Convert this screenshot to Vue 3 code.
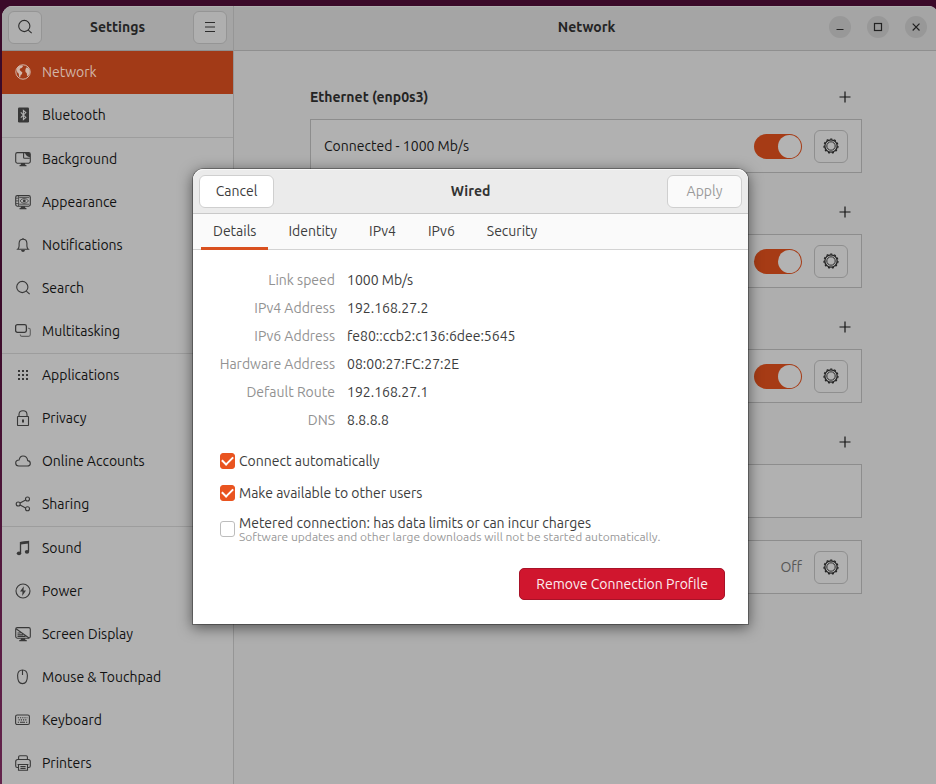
<script setup>
import { ref } from 'vue'

const groups = [
  [
    { icon: 'globe', label: 'Network' },
    { icon: 'bluetooth', label: 'Bluetooth' },
  ],
  [
    { icon: 'background', label: 'Background' },
    { icon: 'appearance', label: 'Appearance' },
    { icon: 'bell', label: 'Notifications' },
    { icon: 'search', label: 'Search' },
    { icon: 'multitasking', label: 'Multitasking' },
  ],
  [
    { icon: 'apps', label: 'Applications' },
    { icon: 'lock', label: 'Privacy' },
    { icon: 'cloud', label: 'Online Accounts' },
    { icon: 'share', label: 'Sharing' },
  ],
  [
    { icon: 'sound', label: 'Sound' },
    { icon: 'power', label: 'Power' },
    { icon: 'display', label: 'Screen Display' },
    { icon: 'mouse', label: 'Mouse & Touchpad' },
    { icon: 'keyboard', label: 'Keyboard' },
    { icon: 'printer', label: 'Printers' },
  ],
]

const icons = {
  globe:
    '<circle cx="8" cy="8" r="7.2" stroke-width="1"/><path fill="currentColor" stroke="none" d="M1.600 5 4 2.200 7.200 1.200 8 2.600 6.600 4 5.200 4.600 4.600 6 6 7.200 7.400 8.600 6.800 10.200 5.600 11.200 5.200 13.600 4 12.600 3.800 9.800 2.200 8.200zM10.600 4.800l1.200-1.600 1.800 1 1.200 2.600-.2 2.800-1.800 2.600-.8-.8-.2-2.200-1.300-1.200-.2-1.500z"/>',
  bluetooth:
    '<rect x="3" y="0.5" width="11" height="15" rx="1.2" fill="currentColor" stroke="none"/><path stroke="#b1b1b1" d="M5.8 5.4l5 5-2.4 2.2V3.4l2.4 2.2-5 5"/>',
  background:
    '<rect x="0.7" y="1.6" width="14.6" height="10.6" rx="1.6"/><path d="M8.6 2v4.4q0 .9.9.9h5.3"/><path fill="currentColor" stroke="none" d="M10 2h4.4q.6 0 .6.8v3.4q-3.600-.2-5-4.200zM6 12h4v1.600l1.500.6v1h-7v-1l1.500-.6z"/>',
  appearance:
    '<rect x="0.7" y="1.600" width="14.600" height="10.600" rx="1.600"/><g stroke-width=".8"><path d="M3.600 2v10M1 4.200h2.500M1 6.900h2.500M1 9.600h2.500M4.200 3.600h10M4.200 10.200h10"/><path d="M5 6.900q1.800-2.400 4.200-2.400t4.400 2.400q-2 2.400-4.400 2.400T5 6.900z"/></g><circle cx="9.300" cy="6.900" r="1.400" fill="currentColor" stroke="none"/><path fill="currentColor" stroke="none" d="M6 12.200h4v1.400l1.500.6v1h-7v-1l1.500-.6z"/>',
  bell:
    '<path d="M2.600 12.300q1.500-1.300 1.500-3.200V6.200Q4.300 2.300 8 2.300t3.900 3.900v2.900q0 1.900 1.500 3.200z"/><path d="M8 1v1.200"/><path fill="currentColor" stroke="none" d="M6 13h4q-.4 2-2 2t-2-2z"/>',
  search: '<circle cx="7.300" cy="7" r="5.600"/><path d="M11.300 11.100l3.400 3.100"/>',
  multitasking:
    '<rect x="0.600" y="1.600" width="10.800" height="7.800" rx="1.800" stroke-width="1.300"/><path opacity=".65" d="M13 5.200h.6q1.700 0 1.700 1.700v4.600q0 1.900-1.900 1.900H6.800q-1.500 0-1.600-1.900"/>',
  apps:
    '<g fill="currentColor" stroke="none"><path d="M3 3h2v2H3zM7 3h2v2H7zM11 3h2v2h-2zM3 7h2v2H3zM7 7h2v2H7zM11 7h2v2h-2zM3 11h2v2H3zM7 11h2v2H7zM11 11h2v2h-2z"/></g>',
  lock:
    '<rect x="2.500" y="6.500" width="11" height="9" rx=".4"/><path d="M4 6.500V4.600Q4 .7 8 .7t4 3.900v1.900"/><rect x="7" y="9.500" width="2" height="3" fill="currentColor" stroke="none"/>',
  cloud:
    '<path d="M3.700 13h8.600q3 0 3-2.600 0-2.500-2.600-2.800Q12 3 8 3 4.900 3 4.100 7 .7 7.200.7 10q0 3 3 3z"/>',
  share:
    '<circle cx="3.200" cy="8" r="2"/><circle cx="12.500" cy="3" r="2"/><circle cx="12.500" cy="12.800" r="2"/><path d="M5 7l5.700-3M5 9l5.700 2.900"/>',
  sound:
    '<path stroke-width="1.300" d="M5.500 13V2.500l8-1V11"/><path stroke-width="2.400" d="M5.500 3.200l8-1"/><ellipse cx="4" cy="13.300" rx="2.200" ry="1.900" fill="currentColor" stroke="none"/><ellipse cx="12" cy="11.800" rx="2.200" ry="1.900" fill="currentColor" stroke="none"/>',
  power:
    '<circle cx="8" cy="8" r="7"/><path fill="currentColor" stroke="none" d="M8.800 3.200 5 8.600h2.500L7.200 13 11 7.400H8.500z"/>',
  display:
    '<rect x="0.700" y="1.600" width="14.600" height="10.600" rx="1.600"/><path d="M1 2.800l13 9.200M2.500 10.400h8M2.500 8.700h5.500M2.500 7h3"/><path fill="currentColor" stroke="none" d="M6 12.200h4v1.400l1.800.6v1H4.200v-1l1.800-.6z"/>',
  mouse:
    '<path d="M7.500 1q-4.700 0-4.900 5.600-.1 8 4.900 8t4.900-8Q12.200 1 7.500 1z"/><path d="M7.500 1v5"/>',
  keyboard:
    '<rect x="0.600" y="3" width="13.800" height="9.500" rx="1.600"/><path stroke-dasharray="1.200 1" d="M2.800 5.800h9.600M3.600 7.900h8"/><path d="M5 10.200h5M2.800 10.200h1.200M11 10.200h1.200"/>',
  printer:
    '<path d="M3.600 4.400V2q0-1.300 1.300-1.300h6.200q1.300 0 1.300 1.300v2.400"/><path d="M3.400 12.500H2.300Q.7 12.500.7 11V6.600q0-2.100 2.100-2.100h10.400q2.100 0 2.100 2.100V11q0 1.500-1.600 1.500h-1.100"/><path d="M2.600 9.500h10.800M3.500 9.600v5.700h9V9.600M5.400 11.500h5.200M5.400 13.400h5.200"/>',
  menu: '<path stroke-width="1.200" d="M3 3.500h10M3 8h10M3 12.500h10"/>',
  plus: '<path stroke-width="1.200" d="M8 2.500v11M2.500 8h11"/>',
  minimize: '<path stroke-width="1.200" d="M4.500 10.500h7"/>',
  maximize: '<rect x="4.500" y="4.500" width="7" height="7" stroke-width="1.200"/>',
  close: '<path stroke-width="1.200" d="M4.700 4.700l6.800 6.800M11.500 4.700l-6.800 6.800"/>',
  gear:
    '<circle cx="8" cy="8" r="6.200" stroke-width="1.300"/><circle cx="8" cy="8" r="4.200" stroke-width=".9"/><circle cx="8" cy="8" r="7" stroke-width="1.200" stroke-dasharray="2 1.998"/>',
}

const rows = ref([
  { text: 'Connected - 1000 Mb/s', on: true },
  { text: '', on: true },
  { text: '', on: true },
])

const tabs = ['Details', 'Identity', 'IPv4', 'IPv6', 'Security']
const activeTab = ref('Details')
const activePanel = ref('Network')

const details = [
  ['Link speed', '1000 Mb/s'],
  ['IPv4 Address', '192.168.27.2'],
  ['IPv6 Address', 'fe80::ccb2:c136:6dee:5645'],
  ['Hardware Address', '08:00:27:FC:27:2E'],
  ['Default Route', '192.168.27.1'],
  ['DNS', '8.8.8.8'],
]

const autoConnect = ref(true)
const shared = ref(true)
const metered = ref(false)
</script>

<template>
  <div class="desktop">
    <div class="window">
      <aside class="sidebar">
        <header class="bar">
          <button class="tool" aria-label="Search"><svg class="icon" viewBox="0 0 16 16" v-html="icons.search" /></button>
          <h1 class="title">Settings</h1>
          <button class="tool" aria-label="Menu"><svg class="icon" viewBox="0 0 16 16" v-html="icons.menu" /></button>
        </header>
        <nav>
          <ul v-for="(group, g) in groups" :key="g" class="group">
            <li v-for="item in group" :key="item.label">
              <a
                href="#"
                class="item"
                :class="{ active: activePanel === item.label }"
                @click.prevent="activePanel = item.label"
              >
                <svg class="icon" viewBox="0 0 16 16" v-html="icons[item.icon]" />
                <span>{{ item.label }}</span>
              </a>
            </li>
          </ul>
        </nav>
      </aside>

      <main class="main">
        <header class="bar main-bar">
          <h2 class="title">Network</h2>
          <div class="controls">
            <button class="control" aria-label="Minimize"><svg class="icon" viewBox="0 0 16 16" v-html="icons.minimize" /></button>
            <button class="control" aria-label="Maximize"><svg class="icon" viewBox="0 0 16 16" v-html="icons.maximize" /></button>
            <button class="control" aria-label="Close"><svg class="icon" viewBox="0 0 16 16" v-html="icons.close" /></button>
          </div>
        </header>
        <div class="content">
          <section v-for="(row, i) in rows" :key="i" class="section">
            <div class="section-head">
              <h3 v-if="i === 0" class="section-title">Ethernet (enp0s3)</h3>
              <button class="add" aria-label="Add"><svg class="icon" viewBox="0 0 16 16" v-html="icons.plus" /></button>
            </div>
            <div class="card">
              <span class="card-text">{{ row.text }}</span>
              <input v-model="row.on" class="switch" type="checkbox" role="switch" aria-label="Enabled" />
              <button class="gear" aria-label="Options"><svg class="icon" viewBox="0 0 16 16" v-html="icons.gear" /></button>
            </div>
          </section>
          <section class="section">
            <div class="section-head">
              <button class="add" aria-label="Add"><svg class="icon" viewBox="0 0 16 16" v-html="icons.plus" /></button>
            </div>
            <div class="card"></div>
          </section>
          <section class="section proxy">
            <div class="card">
              <span class="card-text"></span>
              <span class="state">Off</span>
              <button class="gear" aria-label="Options"><svg class="icon" viewBox="0 0 16 16" v-html="icons.gear" /></button>
            </div>
          </section>
        </div>
      </main>

      <div class="overlay">
        <div class="dialog" role="dialog" aria-labelledby="dialog-title">
          <header class="dialog-bar">
            <button class="btn">Cancel</button>
            <h2 id="dialog-title" class="dialog-title">Wired</h2>
            <button class="btn" disabled>Apply</button>
          </header>
          <div class="tabs" role="tablist">
            <button
              v-for="tab in tabs"
              :key="tab"
              class="tab"
              :class="{ selected: activeTab === tab }"
              role="tab"
              :aria-selected="activeTab === tab"
              @click="activeTab = tab"
            >{{ tab }}</button>
          </div>
          <div class="panel">
            <dl class="details">
              <template v-for="[name, value] in details" :key="name">
                <dt>{{ name }}</dt>
                <dd>{{ value }}</dd>
              </template>
            </dl>
            <div class="options">
              <label class="option"><input v-model="autoConnect" type="checkbox" class="check" /><span>Connect automatically</span></label>
              <label class="option"><input v-model="shared" type="checkbox" class="check" /><span>Make available to other users</span></label>
              <label class="option">
                <input v-model="metered" type="checkbox" class="check" />
                <span class="stack">
                  <span>Metered connection: has data limits or can incur charges</span>
                  <small>Software updates and other large downloads will not be started automatically.</small>
                </span>
              </label>
            </div>
            <div class="actions"><button class="remove">Remove Connection Profile</button></div>
          </div>
        </div>
      </div>
    </div>
  </div>
</template>

<style>
body {
  margin: 0;
  overflow: hidden;
  background: #3b0a29;
}
</style>

<style scoped>
* {
  box-sizing: border-box;
}
.desktop {
  height: 100vh;
  overflow: hidden;
  padding: 6px 0 0 2px;
  background: linear-gradient(#3b0a29 0%, #3b0a29 40%, #5c1d45 85%, #64244c 100%);
  font-family: Ubuntu, 'Noto Sans', sans-serif;
  font-size: 14px;
  line-height: 20px;
  color: #151515;
}
button {
  font: inherit;
  color: inherit;
  padding: 0;
  margin: 0;
  border: 0;
  background: none;
}
h1, h2, h3, ul, dl, dd {
  margin: 0;
  padding: 0;
}
.icon {
  width: 16px;
  height: 16px;
  flex: none;
  fill: none;
  stroke: currentColor;
  stroke-width: 1.1;
}
.window {
  position: relative;
  display: flex;
  height: 100%;
  margin-right: -3px;
  overflow: hidden;
  border-radius: 11px 11px 0 0;
  background: #aeaeae;
}
.sidebar {
  flex: none;
  width: 232px;
  border-right: 1px solid #969696;
  background: #b1b1b1;
}
.bar {
  display: flex;
  align-items: center;
  justify-content: space-between;
  height: 45px;
  padding: 0 6px 2px;
  border-bottom: 1px solid #8f8f8f;
  background: #a5a5a5;
  box-shadow: inset 0 1px #b0b0b0;
}
.title {
  font-size: 14px;
  font-weight: 700;
  color: #242424;
}
.tool {
  display: flex;
  align-items: center;
  justify-content: center;
  width: 34px;
  height: 33px;
  border: 1px solid #959595;
  border-radius: 6px;
  background: #afafaf;
  color: #2c2c2c;
}
.group {
  list-style: none;
}
.group + .group {
  border-top: 1px solid #9d9d9d;
}
.item {
  display: flex;
  align-items: center;
  gap: 11px;
  height: 43px;
  padding: 0 13px 2px;
  color: #121212;
  text-decoration: none;
}
.item .icon {
  color: #383838;
}
.item.active,
.item.active .icon {
  color: #d2b6a9;
}
.item.active {
  background: #a23a17;
}
.main {
  flex: 1;
  min-width: 0;
}
.main-bar {
  position: relative;
  justify-content: center;
}
.controls {
  position: absolute;
  right: 12px;
  display: flex;
  gap: 16px;
}
.control {
  display: flex;
  align-items: center;
  justify-content: center;
  width: 22px;
  height: 22px;
  border-radius: 50%;
  background: #989898;
  color: #222;
}
.content {
  padding: 23px 77px 23px 76px;
}
.section {
  margin-bottom: 16px;
}
.section-head {
  display: flex;
  align-items: center;
  justify-content: flex-end;
  height: 45px;
  padding-right: 9px;
}
.section-title {
  flex: 1;
  font-size: 14px;
  font-weight: 700;
  color: #242424;
}
.add {
  display: flex;
}
.card {
  display: flex;
  align-items: center;
  gap: 12px;
  height: 54px;
  padding: 0 13px;
  border: 1px solid #8d8d8d;
  background: #b1b1b1;
}
.card-text {
  flex: 1;
}
.proxy {
  padding-top: 6px;
}
.state {
  color: #575757;
}
.switch {
  appearance: none;
  display: flex;
  width: 48px;
  height: 25px;
  margin: 0;
  padding: 1px;
  border-radius: 13px;
  background: #8d8d8d;
}
.switch::before {
  content: '';
  width: 23px;
  height: 23px;
  border-radius: 50%;
  background: #b3b3b3;
}
.switch:checked {
  justify-content: flex-end;
  background: #a63b15;
}
.gear {
  display: flex;
  align-items: center;
  justify-content: center;
  width: 34px;
  height: 33px;
  border: 1px solid #8f8f8f;
  border-radius: 6px;
  color: #222;
}
.overlay {
  position: absolute;
  inset: 0;
  display: flex;
  align-items: flex-start;
  justify-content: center;
  padding-top: 163px;
}
.dialog {
  width: 555px;
  border-radius: 11px 11px 0 0;
  background: #fff;
  color: #3d3d3d;
  box-shadow: 0 0 0 1px rgba(0, 0, 0, 0.3), 0 3px 14px 1px rgba(0, 0, 0, 0.5);
}
.dialog-bar {
  display: flex;
  align-items: center;
  justify-content: space-between;
  height: 45px;
  padding: 0 6px;
  border-bottom: 1px solid #c9c9c9;
  border-radius: 11px 11px 0 0;
  background: #ebebeb;
  box-shadow: inset 0 1px #f8f8f8;
}
.dialog-title {
  font-size: 14px;
  font-weight: 700;
  color: #333;
}
.btn {
  width: 75px;
  height: 33px;
  border: 1px solid #cfcfcf;
  border-radius: 6px;
  background: #fff;
}
.btn:disabled {
  background: #fafafa;
  color: #9a9a9a;
}
.tabs {
  display: flex;
  gap: 8px;
  height: 36px;
  padding: 0 8px;
  border-bottom: 1px solid #d3d3d3;
  background: #fafafa;
}
.tab {
  height: 36px;
  padding: 0 12px;
  border-bottom: 3px solid transparent;
}
.tab.selected {
  border-bottom-color: #d9501f;
}
.panel {
  padding: 16px 23px 24px 27px;
}
.details {
  display: grid;
  grid-template-columns: 115px 1fr;
  column-gap: 12px;
  line-height: 28px;
}
dt {
  display: flex;
  justify-content: flex-end;
  white-space: nowrap;
  color: #929292;
}
.options {
  display: flex;
  flex-direction: column;
  gap: 12px;
  padding-top: 17px;
}
.option {
  display: flex;
  align-items: center;
  gap: 4px;
}
.check {
  appearance: none;
  display: grid;
  place-items: center;
  flex: none;
  width: 15px;
  height: 16px;
  margin: 0;
  border: 1px solid #bdbdbd;
  border-radius: 3px;
  background: #fff;
}
.check:checked {
  border-color: #e95420;
  background: #e95420;
}
.check:checked::before {
  content: '';
  width: 9px;
  height: 5px;
  margin-bottom: 3px;
  border: solid #fff;
  border-width: 0 0 2px 2px;
  transform: rotate(-45deg);
}
.stack {
  display: flex;
  flex-direction: column;
  line-height: 16px;
}
small {
  font-size: 12px;
  line-height: 12px;
  color: #999;
}
.actions {
  display: flex;
  justify-content: flex-end;
  padding-top: 25px;
}
.remove {
  height: 32px;
  padding: 0 16px;
  border: 1px solid #a81228;
  border-radius: 5px;
  background: #d0162e;
  color: #fbeef0;
}
</style>
